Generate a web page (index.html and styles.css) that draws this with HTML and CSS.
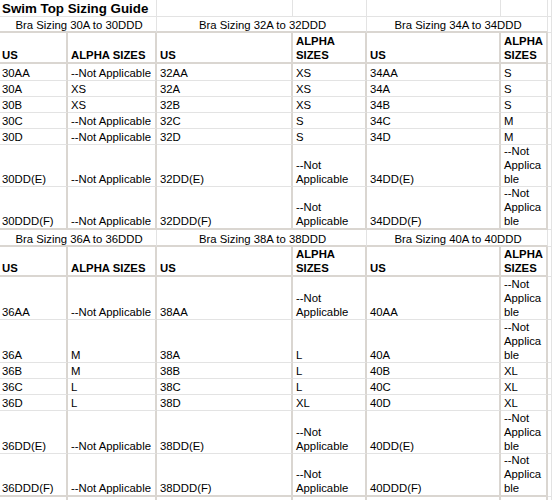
FILE: index.html
```html
<!DOCTYPE html>
<html>
<head>
<meta charset="utf-8">
<title>Swim Top Sizing Guide</title>
<link rel="stylesheet" href="styles.css">
</head>
<body>
<div class="sheet">
  <div class="c top title span2">Swim Top Sizing Guide</div>
  <div class="c top"></div><div class="c top"></div><div class="c top"></div><div class="c top"></div><div class="c top g"></div>

  <div class="c sec span2">Bra Sizing 30A to 30DDD</div>
  <div class="c sec span2">Bra Sizing 32A to 32DDD</div>
  <div class="c sec span2">Bra Sizing 34A to 34DDD</div>
  <div class="c top g"></div>

  <div class="c hd a">US</div><div class="c hd">ALPHA SIZES</div><div class="c hd">US</div><div class="c hd">ALPHA SIZES</div><div class="c hd">US</div><div class="c hd f">ALPHA SIZES</div><div class="c g"></div>

  <div class="c a">30AA</div><div class="c">--Not Applicable</div><div class="c">32AA</div><div class="c">XS</div><div class="c">34AA</div><div class="c f">S</div><div class="c g"></div>
  <div class="c a">30A</div><div class="c">XS</div><div class="c">32A</div><div class="c">XS</div><div class="c">34A</div><div class="c f">S</div><div class="c g"></div>
  <div class="c a">30B</div><div class="c">XS</div><div class="c">32B</div><div class="c">XS</div><div class="c">34B</div><div class="c f">S</div><div class="c g"></div>
  <div class="c a">30C</div><div class="c">--Not Applicable</div><div class="c">32C</div><div class="c">S</div><div class="c">34C</div><div class="c f">M</div><div class="c g"></div>
  <div class="c a">30D</div><div class="c">--Not Applicable</div><div class="c">32D</div><div class="c">S</div><div class="c">34D</div><div class="c f">M</div><div class="c g"></div>
  <div class="c a">30DD(E)</div><div class="c">--Not Applicable</div><div class="c">32DD(E)</div><div class="c">--Not Applicable</div><div class="c">34DD(E)</div><div class="c f">--Not Applicable</div><div class="c g"></div>
  <div class="c a end">30DDD(F)</div><div class="c end">--Not Applicable</div><div class="c end">32DDD(F)</div><div class="c end">--Not Applicable</div><div class="c end">34DDD(F)</div><div class="c f end">--Not Applicable</div><div class="c g"></div>

  <div class="c sec span2">Bra Sizing 36A to 36DDD</div>
  <div class="c sec span2">Bra Sizing 38A to 38DDD</div>
  <div class="c sec span2">Bra Sizing 40A to 40DDD</div>
  <div class="c top g"></div>

  <div class="c hd a">US</div><div class="c hd">ALPHA SIZES</div><div class="c hd">US</div><div class="c hd">ALPHA SIZES</div><div class="c hd">US</div><div class="c hd f">ALPHA SIZES</div><div class="c g"></div>

  <div class="c a">36AA</div><div class="c">--Not Applicable</div><div class="c">38AA</div><div class="c">--Not Applicable</div><div class="c">40AA</div><div class="c f">--Not Applicable</div><div class="c g"></div>
  <div class="c a">36A</div><div class="c">M</div><div class="c">38A</div><div class="c">L</div><div class="c">40A</div><div class="c f">--Not Applicable</div><div class="c g"></div>
  <div class="c a">36B</div><div class="c">M</div><div class="c">38B</div><div class="c">L</div><div class="c">40B</div><div class="c f">XL</div><div class="c g"></div>
  <div class="c a">36C</div><div class="c">L</div><div class="c">38C</div><div class="c">L</div><div class="c">40C</div><div class="c f">XL</div><div class="c g"></div>
  <div class="c a">36D</div><div class="c">L</div><div class="c">38D</div><div class="c">XL</div><div class="c">40D</div><div class="c f">XL</div><div class="c g"></div>
  <div class="c a">36DD(E)</div><div class="c">--Not Applicable</div><div class="c">38DD(E)</div><div class="c">--Not Applicable</div><div class="c">40DD(E)</div><div class="c f">--Not Applicable</div><div class="c g"></div>
  <div class="c a end">36DDD(F)</div><div class="c end">--Not Applicable</div><div class="c end">38DDD(F)</div><div class="c end">--Not Applicable</div><div class="c end">40DDD(F)</div><div class="c f end">--Not Applicable</div><div class="c g"></div>

  <div class="c a"></div><div class="c"></div><div class="c"></div><div class="c"></div><div class="c"></div><div class="c f"></div><div class="c g"></div>
</div>
</body>
</html>
```

FILE: styles.css
```css
html, body {
  margin: 0;
  padding: 0;
  background: #ffffff;
}

body {
  font-family: "Liberation Sans", Arial, sans-serif;
  font-size: 11.33px;
  color: #000000;
  overflow: hidden;
}

.sheet {
  display: grid;
  width: 552px;
  grid-template-columns: 68px 89px 136px 74px 134px 47px 1fr;
  grid-template-rows: 17px 16px 31px 17px 16px 16px 16px 16px 42px 43px 17px 30px 43px 43px 16px 16px 16px 43px 43px 16px;
}

.c {
  box-sizing: border-box;
  display: flex;
  align-items: flex-end;
  line-height: 14px;
  padding: 0 1px 0 3px;
  border-right: 2px solid #dad6d1;
  border-bottom: 1px solid #e3e3e3;
  overflow: hidden;
}

.a {
  padding-left: 2px;
}

.f {
  overflow-wrap: anywhere;
}

.g {
  border-right: 1px solid #e3e3e3;
  padding: 0;
}

.span2 {
  grid-column: span 2;
}

.top {
  border-right: 1px solid #e3e3e3;
}

.title {
  font-size: 13.33px;
  font-weight: bold;
  line-height: 14px;
  padding-left: 2px;
}

.sec {
  justify-content: center;
  line-height: 11px;
  border-right: 1px solid #e3e3e3;
  border-bottom: 2px solid #dad6d1;
}

.hd {
  font-weight: bold;
  border-bottom: 2px solid #dad6d1;
}

.end {
  border-bottom: 2px solid #dad6d1;
}
```
